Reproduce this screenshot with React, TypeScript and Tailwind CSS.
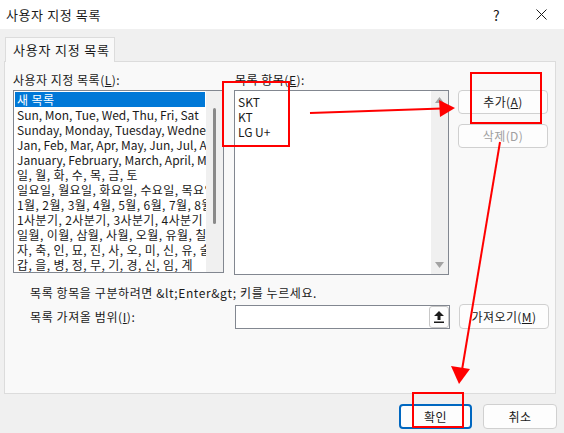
import React from 'react';

const font = { fontFamily: '"Noto Sans CJK KR", "Noto Sans", sans-serif' };

const leftItems = [
  'Sun, Mon, Tue, Wed, Thu, Fri, Sat',
  'Sunday, Monday, Tuesday, Wednesday, Thursday, Friday, Saturday',
  'Jan, Feb, Mar, Apr, May, Jun, Jul, Aug, Sep, Oct, Nov, Dec',
  'January, February, March, April, May, June, July',
  '일, 월, 화, 수, 목, 금, 토',
  '일요일, 월요일, 화요일, 수요일, 목요일, 금요일, 토요일',
  '1월, 2월, 3월, 4월, 5월, 6월, 7월, 8월, 9월, 10월',
  '1사분기, 2사분기, 3사분기, 4사분기',
  '일월, 이월, 삼월, 사월, 오월, 유월, 칠월, 팔월',
  '자, 축, 인, 묘, 진, 사, 오, 미, 신, 유, 술, 해',
  '갑, 을, 병, 정, 무, 기, 경, 신, 임, 계',
];

const Btn: React.FC<{ children: React.ReactNode; disabled?: boolean; primary?: boolean; className?: string }> = ({
  children,
  disabled,
  primary,
  className = '',
}) => (
  <div
    className={`flex items-center justify-center rounded-[4px] bg-[#fdfdfd] text-[12px] tracking-[0.4px] ${
      primary ? 'border-2 border-[#0067c0]' : 'border border-[#d0d0d0]'
    } ${disabled ? 'text-[#a0a0a0]' : 'text-[#1a1a1a]'} ${className}`}
  >
    {children}
  </div>
);

const App: React.FC = () => {
  return (
    <div className="relative w-[564px] h-[433px] bg-[#f0f0f0] overflow-hidden text-[#1a1a1a]" style={font}>
      {/* title bar */}
      <div className="h-[29px] bg-white flex items-center pl-[6px] relative">
        <span className="text-[13px] tracking-[0.6px]">사용자 지정 목록</span>
        <span className="absolute left-[493px] top-[5px] text-[14px]">?</span>
        <svg className="absolute left-[536px] top-[9px]" width="11" height="11" viewBox="0 0 11 11">
          <path d="M0.5 0.5 L10.5 10.5 M10.5 0.5 L0.5 10.5" stroke="#1a1a1a" strokeWidth="1" />
        </svg>
      </div>

      {/* tab */}
      <div className="ml-[5px] mt-[8px] w-[110px] h-[25px] bg-[#f9f9f9] border border-b-0 border-[#dcdcdc] flex items-center pl-[7px] text-[13px] tracking-[0.8px] relative z-10">
        사용자 지정 목록
      </div>

      {/* panel */}
      <div className="ml-[4px] -mt-[1px] w-[552px] h-[333px] bg-[#f9f9f9] border border-[#dcdcdc] pl-[8px] pt-[8px]">
        <div className="flex">
          {/* left column */}
          <div className="w-[211px]">
            <div className="text-[12px] h-[19px] leading-[19px] tracking-[0.5px]">
              사용자 지정 목록(<span className="underline">L</span>):
            </div>
            <div className="mt-[1px] h-[183px] border border-[#828790] bg-white flex overflow-hidden">
              <div className="flex-1 p-[1px] overflow-hidden text-[12px] leading-[15px] whitespace-nowrap">
                <div className="bg-[#0078d7] text-white pl-[2px] h-[15px] tracking-[0.4px]">새 목록</div>
                {leftItems.map((t) => (
                  <div
                    key={t}
                    className={`pl-[2px] h-[15px] ${/[가-힣]/.test(t) ? 'tracking-[0.4px]' : 'tracking-normal'}`}
                  >
                    {t}
                  </div>
                ))}
              </div>
              <div className="w-[17px] bg-[#f0f0f0] flex justify-center pt-[17px]">
                <div className="w-[3px] h-[116px] rounded-full bg-[#8a8a8a]" />
              </div>
            </div>
          </div>

          {/* right column */}
          <div className="ml-[10px] w-[215px]">
            <div className="text-[12px] h-[19px] leading-[19px] pl-[1px] tracking-[0.5px]">
              목록 항목(<span className="underline">E</span>):
            </div>
            <div className="mt-[1px] h-[185px] border border-[#828790] bg-white flex">
              <div className="flex-1 pl-[3px] pt-[3px] text-[12px] leading-[15px]">
                <div>SKT</div>
                <div>KT</div>
                <div>LG U+</div>
              </div>
              <div className="w-[17px] bg-[#f0f0f0] flex flex-col items-center justify-between py-[6px]">
                <svg width="9" height="6" viewBox="0 0 9 6">
                  <path d="M0 6 L4.5 0 L9 6 Z" fill="#a3a3a3" />
                </svg>
                <svg width="9" height="6" viewBox="0 0 9 6">
                  <path d="M0 0 L4.5 6 L9 0 Z" fill="#a3a3a3" />
                </svg>
              </div>
            </div>
          </div>

          {/* buttons */}
          <div className="ml-[9px] pt-[20px] flex flex-col gap-[10px]">
            <Btn className="w-[90px] h-[24px]">
              추가(<span className="underline">A</span>)
            </Btn>
            <Btn className="w-[90px] h-[24px]" disabled>
              삭제(D)
            </Btn>
          </div>
        </div>

        <div className="mt-[10px] pl-[17px] text-[12px] leading-[15px] tracking-[0.6px]">
          목록 항목을 구분하려면 &amp;lt;Enter&amp;gt; 키를 누르세요.
        </div>
        <div className="mt-[4px] flex items-center">
          <div className="pl-[17px] w-[222px] text-[12px] tracking-[0.6px]">
            목록 가져올 범위(<span className="underline">I</span>):
          </div>
          <div className="w-[215px] h-[24px] border border-[#828790] bg-white flex justify-end">
            <div className="w-[20px] h-[22px] border border-[#c8c8c8] rounded-[3px] bg-[#fdfdfd] flex items-center justify-center">
              <svg width="10" height="12" viewBox="0 0 10 12">
                <path d="M5 0 L10 5 L6.5 5 L6.5 9 L3.5 9 L3.5 5 L0 5 Z" fill="#1a1a1a" />
                <rect x="0" y="10.5" width="10" height="1.5" fill="#1a1a1a" />
              </svg>
            </div>
          </div>
          <Btn className="ml-[9px] w-[90px] h-[25px]">
            가져오기(<span className="underline">M</span>)
          </Btn>
        </div>
      </div>

      {/* bottom buttons */}
      <div className="flex justify-end gap-[11px] pr-[7px] mt-[10px]">
        <Btn primary className="w-[73px] h-[25px]">
          확인
        </Btn>
        <Btn className="w-[74px] h-[25px]">취소</Btn>
      </div>

      {/* red annotations */}
      <svg className="absolute left-0 top-0 pointer-events-none" width="564" height="433" viewBox="0 0 564 433">
        <rect x="223" y="82" width="66" height="64" fill="none" stroke="#ff0000" strokeWidth="2" />
        <rect x="471" y="73" width="70" height="50" fill="none" stroke="#ff0000" strokeWidth="2" />
        <rect x="413" y="393" width="50" height="34" fill="none" stroke="#ff0000" strokeWidth="2" />
        <line x1="310" y1="113" x2="442" y2="108.5" stroke="#ff0000" strokeWidth="2" />
        <path d="M455 108 L439 100 L440 117 Z" fill="#ff0000" />
        <line x1="500" y1="142" x2="462" y2="370" stroke="#ff0000" strokeWidth="2" />
        <path d="M459 384 L451 366 L470 369 Z" fill="#ff0000" />
      </svg>
    </div>
  );
};

export default App;
